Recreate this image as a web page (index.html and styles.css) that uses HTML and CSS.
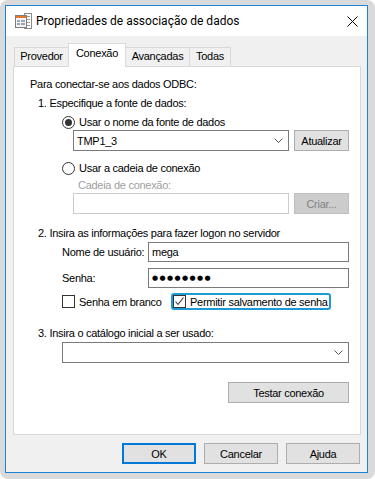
FILE: index.html
```html
<!DOCTYPE html>
<html lang="pt">
<head>
    <meta charset="UTF-8">
    <title>Propriedades de associação de dados</title>
    <link rel="stylesheet" href="styles.css">
</head>
<body>
<div class="shadow">
    <div class="window">
        <div class="titlebar">
            <svg class="app-icon" width="17" height="17" viewBox="0 0 17 17">
                <rect x="9.5" y="0.5" width="7" height="15" fill="#fff" stroke="#8a8a8a"/>
                <line x1="11" y1="3.5" x2="15" y2="3.5" stroke="#9a9a9a"/>
                <line x1="11" y1="6.5" x2="15" y2="6.5" stroke="#9a9a9a"/>
                <line x1="11" y1="9.5" x2="15" y2="9.5" stroke="#9a9a9a"/>
                <line x1="11" y1="12.5" x2="15" y2="12.5" stroke="#9a9a9a"/>
                <rect x="0.5" y="2.5" width="11" height="12" fill="#f4f4f4" stroke="#7d7d7d"/>
                <rect x="1" y="3" width="10" height="2" fill="#e8762b"/>
                <rect x="2" y="7" width="3" height="2" fill="#9aa6b4"/>
                <rect x="6" y="7" width="4" height="2" fill="#9aa6b4"/>
                <rect x="2" y="10" width="3" height="2" fill="#9aa6b4"/>
                <rect x="6" y="10" width="4" height="2" fill="#9aa6b4"/>
            </svg>
            <span class="title">Propriedades de associação de dados</span>
            <svg class="close" width="11" height="11" viewBox="0 0 11 11">
                <path d="M0.5 0.5 L10.5 10.5 M10.5 0.5 L0.5 10.5" stroke="#000" stroke-width="1"/>
            </svg>
        </div>

        <div class="content">
            <div class="tabs">
                <div class="tab tab-provedor">Provedor</div>
                <div class="tab tab-conexao active">Conexão</div>
                <div class="tab tab-avancadas">Avançadas</div>
                <div class="tab tab-todas">Todas</div>
            </div>

            <div class="panel">
                <div class="line intro">Para conectar-se aos dados ODBC:</div>
                <div class="line step step-1">1. Especifique a fonte de dados:</div>

                <div class="option option-1">
                    <span class="radio checked"></span>
                    <span>Usar o nome da fonte de dados</span>
                </div>
                <div class="field-row row-dsn">
                    <div class="combo combo-dsn">
                        <span class="value">TMP1_3</span>
                        <svg class="chevron" width="9" height="5" viewBox="0 0 9 5"><path d="M0.5 0.5 L4.5 4.5 L8.5 0.5" fill="none" stroke="#555"/></svg>
                    </div>
                    <div class="btn btn-small">Atualizar</div>
                </div>

                <div class="option option-2">
                    <span class="radio"></span>
                    <span>Usar a cadeia de conexão</span>
                </div>
                <div class="line muted cadeia-label">Cadeia de conexão:</div>
                <div class="field-row row-cadeia">
                    <div class="input disabled"></div>
                    <div class="btn btn-small disabled">Criar...</div>
                </div>

                <div class="line step step-2">2. Insira as informações para fazer logon no servidor</div>
                <div class="login-row row-user">
                    <span class="login-label">Nome de usuário:</span>
                    <div class="input login-input">mega</div>
                </div>
                <div class="login-row row-pass">
                    <span class="login-label">Senha:</span>
                    <div class="input login-input"><span class="dots">●●●●●●●●</span></div>
                </div>
                <div class="checks">
                    <div class="check check-blank">
                        <span class="box"></span>
                        <span>Senha em branco</span>
                    </div>
                    <div class="check check-save focused">
                        <span class="box">
                            <svg width="11" height="11" viewBox="0 0 11 11"><path d="M1.5 5.5 L4 8.5 L9.5 1.5" fill="none" stroke="#333" stroke-width="1.1"/></svg>
                        </span>
                        <span>Permitir salvamento de senha</span>
                    </div>
                </div>

                <div class="line step step-3">3. Insira o catálogo inicial a ser usado:</div>
                <div class="combo combo-catalog">
                    <span class="value"></span>
                    <svg class="chevron" width="9" height="5" viewBox="0 0 9 5"><path d="M0.5 0.5 L4.5 4.5 L8.5 0.5" fill="none" stroke="#555"/></svg>
                </div>
                <div class="test-row">
                    <div class="btn btn-test">Testar conexão</div>
                </div>
            </div>

            <div class="actions">
                <div class="btn btn-dialog default">OK</div>
                <div class="btn btn-dialog">Cancelar</div>
                <div class="btn btn-dialog">Ajuda</div>
            </div>
        </div>
    </div>
</div>
</body>
</html>
```

FILE: styles.css
```css
* {
    box-sizing: border-box;
}
html,
body {
    margin: 0;
    padding: 0;
    background: #ffffff;
}
body {
    font-family: "Liberation Sans", Arial, sans-serif;
    font-size: 11px;
    letter-spacing: -0.28px;
    color: #000;
}

/* moldura com sombra */
.shadow {
    width: 375px;
    height: 479px;
    padding: 5px 7px 6px 5px;
    background: #dadada;
    border-radius: 8px;
}
.window {
    width: 363px;
    height: 468px;
    border: 1px solid #1883d7;
    background: #f0f0f0;
    display: flex;
    flex-direction: column;
}

/* barra de titulo */
.titlebar {
    height: 30px;
    background: #fff;
    display: flex;
    align-items: center;
    padding-left: 9px;
}
.app-icon {
    flex: none;
    margin-top: 1px;
}
.title {
    margin-left: 4px;
    font-family: Roboto, "Liberation Sans", sans-serif;
    font-size: 12px;
    letter-spacing: 0;
}
.close {
    margin-left: auto;
    margin-right: 9px;
}

.content {
    flex: 1;
    padding: 0 6px 0 7px;
    display: flex;
    flex-direction: column;
}

/* abas */
.tabs {
    height: 30px;
    display: flex;
    align-items: flex-end;
    padding-left: 1px;
}
.tab {
    height: 19px;
    border: 1px solid #d9d9d9;
    border-bottom: none;
    background: #f0f0f0;
    text-align: center;
    line-height: 17px;
    margin-left: -1px;
}
.tab-provedor {
    width: 55px;
    margin-left: 0;
}
.tab-conexao {
    width: 58px;
}
.tab-avancadas {
    width: 65px;
}
.tab-todas {
    width: 42px;
}
.tab.active {
    height: 24px;
    background: #fff;
    line-height: 18px;
    margin-bottom: -1px;
    position: relative;
    z-index: 1;
}

/* painel */
.panel {
    height: 369px;
    border: 1px solid #d9d9d9;
    background: #fff;
    padding: 0 11px 0 16px;
}
.line {
    height: 14px;
    line-height: 14px;
    white-space: nowrap;
}
.intro {
    margin-top: 10px;
}
.step {
    margin-left: 8px;
}
.step-1 {
    margin-top: 5px;
}
.step-2 {
    margin-top: 12px;
}
.step-3 {
    margin-top: 16px;
}
.muted {
    color: #a0a0a0;
}

.option {
    height: 14px;
    display: flex;
    align-items: center;
    margin-left: 32px;
}
.option-1 {
    margin-top: 5px;
}
.option-2 {
    margin-top: 10px;
}
.radio {
    width: 13px;
    height: 13px;
    border: 1px solid #333;
    border-radius: 50%;
    background: #fff;
    margin-right: 4px;
    display: flex;
    align-items: center;
    justify-content: center;
}
.radio.checked::after {
    content: "";
    width: 7px;
    height: 7px;
    border-radius: 50%;
    background: #333;
}

.field-row {
    display: flex;
    gap: 5px;
    margin-left: 43px;
}
.row-dsn {
    margin-top: 1px;
}
.cadeia-label {
    margin-top: 3px;
    margin-left: 48px;
}
.row-cadeia {
    margin-top: 1px;
}

.combo,
.input {
    height: 21px;
    border: 1px solid #7a7a7a;
    background: #fff;
    display: flex;
    align-items: center;
    padding-left: 3px;
}
.combo-dsn,
.row-cadeia .input {
    width: 216px;
}
.combo .chevron {
    margin-left: auto;
    margin-right: 5px;
}
.input.disabled {
    border-color: #cccccc;
}

.btn {
    height: 21px;
    border: 1px solid #adadad;
    background: #e1e1e1;
    display: flex;
    align-items: center;
    justify-content: center;
}
.btn-small {
    width: 55px;
}
.btn.disabled {
    background: #cccccc;
    border-color: #bfbfbf;
    color: #838383;
}

.login-row {
    display: flex;
    align-items: center;
    margin-left: 32px;
}
.row-user {
    margin-top: 2px;
}
.row-pass {
    margin-top: 6px;
}
.login-label {
    width: 86px;
}
.login-input {
    flex: 1;
    height: 20px;
}
.dots {
    font-family: "DejaVu Sans", sans-serif;
    font-size: 7px;
    letter-spacing: 1.4px;
}

.checks {
    display: flex;
    align-items: center;
    margin-top: 5px;
    margin-left: 32px;
    height: 17px;
}
.check {
    display: flex;
    align-items: center;
}
.check-blank {
    width: 109px;
}
.check-save {
    height: 17px;
    border: 2px solid #1e9bd7;
    border-radius: 3px;
    padding-right: 1px;
}
.box {
    width: 13px;
    height: 13px;
    border: 1px solid #333;
    background: #fff;
    margin-right: 4px;
    display: flex;
    align-items: center;
    justify-content: center;
}

.combo-catalog {
    margin-top: 2px;
    margin-left: 32px;
}
.combo-catalog .chevron {
    margin-right: 5px;
}
.test-row {
    display: flex;
    justify-content: flex-end;
    margin-top: 19px;
}
.btn-test {
    width: 121px;
}

/* botoes do dialogo */
.actions {
    display: flex;
    justify-content: flex-end;
    gap: 8px;
    margin-top: 8px;
    padding-right: 1px;
}
.btn-dialog {
    width: 74px;
}
.btn.default {
    border: 2px solid #0078d7;
}
```
